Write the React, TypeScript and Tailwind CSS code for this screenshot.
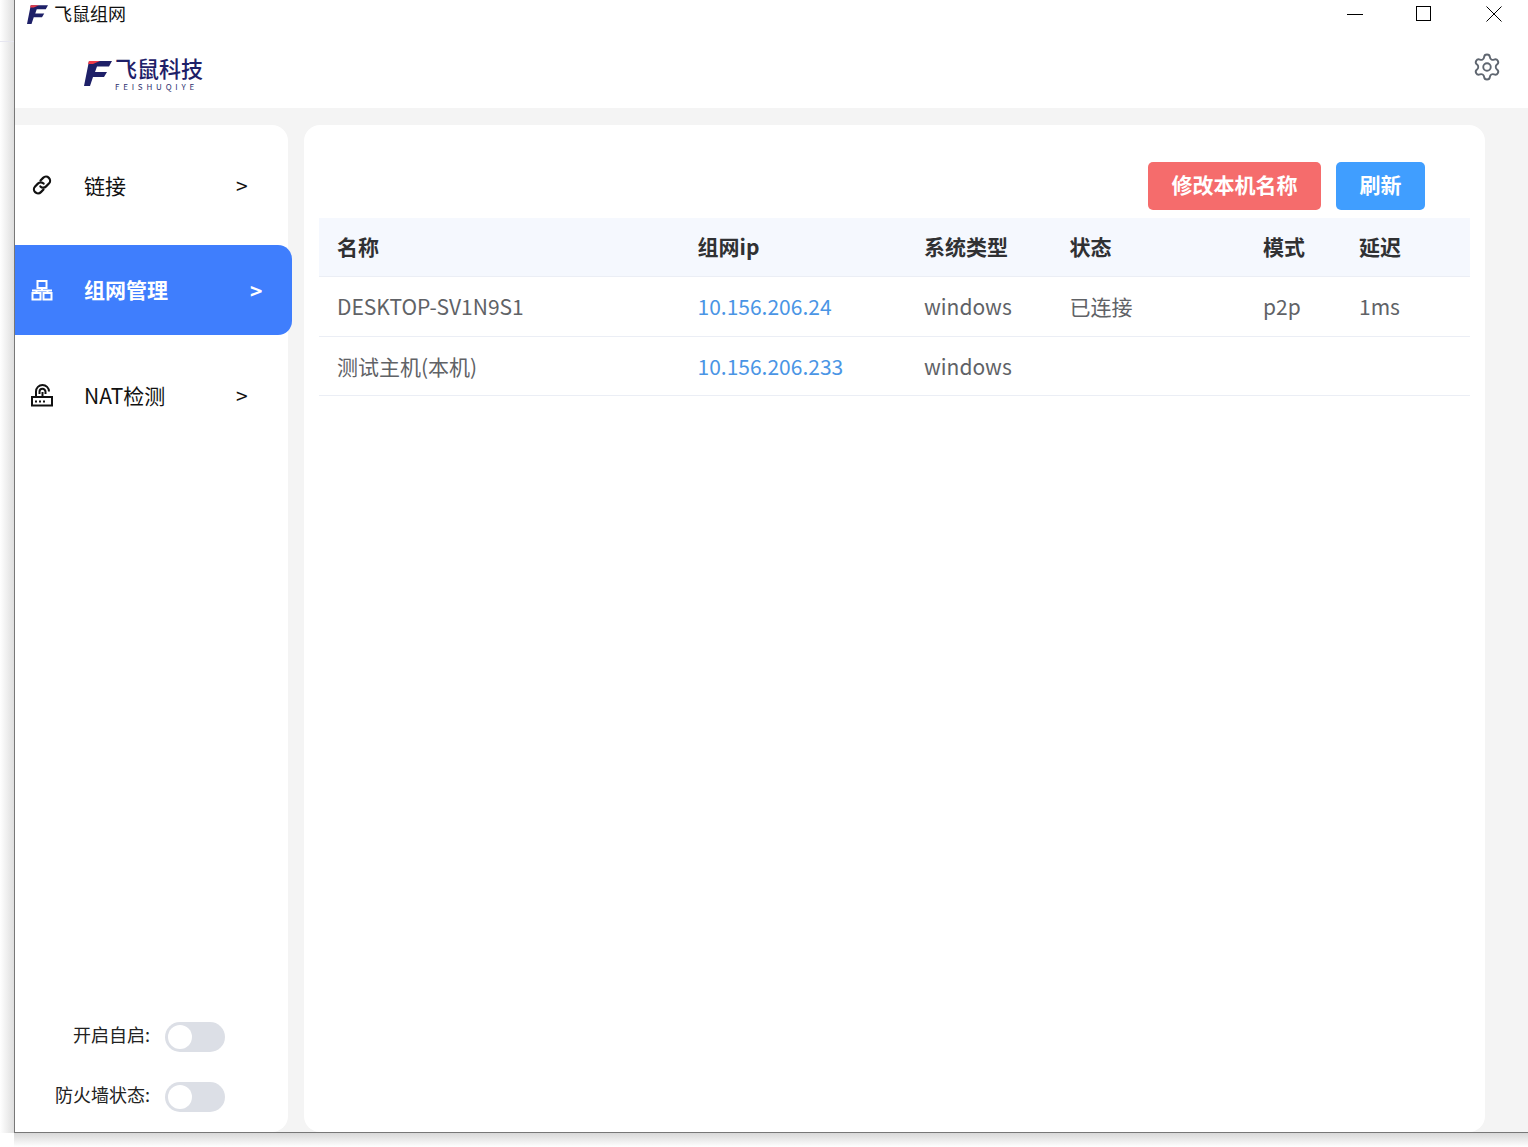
import { Settings } from 'lucide-react';

const cjk = "font-['Noto_Sans_CJK_SC','Noto_Sans',sans-serif]";
const tableCols = 'grid grid-cols-[360.5px_226.5px_145.5px_193.5px_96px_1fr] pl-[18px] items-center';

// F mark of the logo, also used small in the title bar
function LogoMark({ className }: { className: string }) {
  return (
    <svg viewBox="0 0 28 25" className={className}>
      <polygon points="5,0 28,0 25,5.5 13,5.5 11,11 23,11 20,16 9,16 6,25 0,25" fill="#1e2068" />
      <polygon points="5,0 16,0 9,3 4,3" fill="#ee3b48" />
    </svg>
  );
}

function LinkIcon() {
  return (
    <svg viewBox="0 0 24 24" className="w-[24px] h-[24px]" fill="none" stroke="currentColor" strokeWidth="2.2" strokeLinecap="round" strokeLinejoin="round">
      <path d="M10.5 7.5l2.6-2.6a4 4 0 0 1 5.8 5.7l-2.8 2.8a4 4 0 0 1-5.7 0" />
      <path d="M13.5 16.5l-2.6 2.6a4 4 0 0 1-5.8-5.7l2.8-2.8a4 4 0 0 1 5.7 0" />
    </svg>
  );
}

function NetIcon() {
  return (
    <svg viewBox="0 0 24 24" className="w-[24px] h-[24px]" fill="none" stroke="currentColor" strokeWidth="2">
      <rect x="7.5" y="3" width="9" height="7" />
      <rect x="2.5" y="15" width="8" height="6.5" />
      <rect x="13.5" y="15" width="8" height="6.5" />
      <path d="M2 12.5h20M12 10v2.5M6.5 12.5V15M17.5 12.5V15" />
    </svg>
  );
}

function RouterIcon() {
  return (
    <svg viewBox="0 0 24 24" className="w-[24px] h-[24px]" fill="none" stroke="currentColor" strokeWidth="2">
      <rect x="2" y="14" width="20" height="8.5" />
      <path d="M6 14V8.5a6.5 6.5 0 0 1 13 0" />
      <path d="M9.5 11V8.8a3 3 0 0 1 6 0V11" />
      <path d="M12.5 9v5" />
      <path d="M5 18.5h2M9 18.5h2M13 18.5h2" strokeWidth="1.8" />
    </svg>
  );
}

function NavItem({ icon, label, active }: { icon: React.ReactNode; label: string; active?: boolean }) {
  if (active) {
    return (
      <div className="w-[277px] h-[90px] mt-[15px] bg-[#3f7efd] rounded-r-[14px] flex items-center pl-[15px] text-white font-bold">
        <span className="w-[24px] flex justify-center">{icon}</span>
        <span className="ml-[30px] text-[21px] w-[166px]">{label}</span>
        <span className="text-[21px] pt-[2px]">&gt;</span>
      </div>
    );
  }
  return (
    <div className="h-[90px] flex items-center pl-[15px] text-[#111]">
      <span className="w-[24px] flex justify-center">{icon}</span>
      <span className="ml-[30px] text-[21px] w-[152px] pt-[2px]">{label}</span>
      <span className="text-[21px] pt-[2px]">&gt;</span>
    </div>
  );
}

function Toggle({ label }: { label: string }) {
  return (
    <div className="h-[30px] flex items-center justify-end pr-[63px]">
      <span className="text-[18px] text-[#222] mr-[15px] pb-[5px]">{label}</span>
      <div className="w-[60px] h-[30px] rounded-full bg-[#dcdfe6] p-[3px]">
        <div className="w-[24px] h-[24px] rounded-full bg-white" />
      </div>
    </div>
  );
}

export default function App() {
  return (
    <div className={`${cjk} w-[1528px] h-[1147px] bg-white overflow-hidden flex`}>
      {/* desktop behind the window */}
      <div className="w-[14px] h-[1133px] bg-gradient-to-r from-white to-[#dedede]">
        <div className="h-[42px] border-b border-[#e6e6f0]" />
      </div>

      <div className="flex-1 flex flex-col">
        <div className="h-[1133px] flex flex-col border-l border-b border-[#777] bg-white">
          {/* title bar */}
          <div className="h-[28px] flex items-center">
            <LogoMark className="w-[21px] h-[19px] ml-[12px]" />
            <span className="ml-[6px] mb-[2px] text-[18px] leading-none text-[#111]">飞鼠组网</span>
            <div className="ml-auto flex items-center">
              <div className="w-[16px] h-px bg-black mr-[53px]" />
              <div className="w-[15px] h-[15px] border border-black mr-[55px] mb-[2px]" />
              <svg viewBox="0 0 16 16" className="w-[16px] h-[16px] mr-[26px]" stroke="black" strokeWidth="1">
                <path d="M0.5 0.5l15 15M15.5 0.5l-15 15" />
              </svg>
            </div>
          </div>

          {/* logo row */}
          <div className="h-[80px] flex items-center">
            <div className="flex items-start ml-[69px] mt-[14px]">
              <LogoMark className="w-[28px] h-[25px] mt-[3px]" />
              <div className="ml-[3px] mt-[-3px] flex flex-col text-[#1e2068]">
                <span className="text-[22px] leading-[24px] font-medium">飞鼠科技</span>
                <span className="mt-[3px] text-[8px] leading-[10px] tracking-[3.8px] text-[#2d2f6e]">FEISHUQIYE</span>
              </div>
            </div>
            <Settings className="ml-auto mr-[26px] mt-[-2px] w-[30px] h-[30px] text-[#5f6670]" strokeWidth={1.5} />
          </div>

          {/* content */}
          <div className="flex-1 min-h-0 bg-[#f4f4f4] pt-[17px] flex">
            <div className="w-[273px] bg-white rounded-r-[16px] flex flex-col pt-[15px]">
              <NavItem icon={<LinkIcon />} label="链接" />
              <NavItem icon={<NetIcon />} label="组网管理" active />
              <div className="mt-[15px]">
                <NavItem icon={<RouterIcon />} label="NAT检测" />
              </div>
              <div className="mt-auto pb-[20px] flex flex-col gap-[30px]">
                <Toggle label="开启自启:" />
                <Toggle label="防火墙状态:" />
              </div>
            </div>

            <div className="w-[1181px] ml-[16px] bg-white rounded-[16px] px-[15px] pt-[37px]">
              <div className="flex justify-end gap-[15px] pr-[45px] mb-[8px]">
                <button className="w-[173px] h-[48px] pb-[2px] rounded-[5px] bg-[#f56c6c] text-white text-[21px] font-bold">修改本机名称</button>
                <button className="w-[89px] h-[48px] pb-[2px] rounded-[5px] bg-[#409eff] text-white text-[21px] font-bold">刷新</button>
              </div>
              <div className={`${tableCols} h-[59px] bg-[#f5f8fe] border-b border-[#ebeef5] text-[21px] font-bold text-[#303133]`}>
                <span>名称</span>
                <span>组网ip</span>
                <span>系统类型</span>
                <span>状态</span>
                <span>模式</span>
                <span>延迟</span>
              </div>
              <div className={`${tableCols} h-[60px] border-b border-[#ebeef5] text-[21px] text-[#606266]`}>
                <span>DESKTOP-SV1N9S1</span>
                <span className="text-[#4a95e5]">10.156.206.24</span>
                <span>windows</span>
                <span>已连接</span>
                <span>p2p</span>
                <span>1ms</span>
              </div>
              <div className={`${tableCols} h-[59px] pt-[1px] border-b border-[#ebeef5] text-[21px] text-[#606266]`}>
                <span>测试主机(本机)</span>
                <span className="text-[#4a95e5]">10.156.206.233</span>
                <span>windows</span>
              </div>
            </div>
          </div>
        </div>
        {/* window shadow */}
        <div className="flex-1 bg-gradient-to-b from-[#d8d8d8] to-white" />
      </div>
    </div>
  );
}
